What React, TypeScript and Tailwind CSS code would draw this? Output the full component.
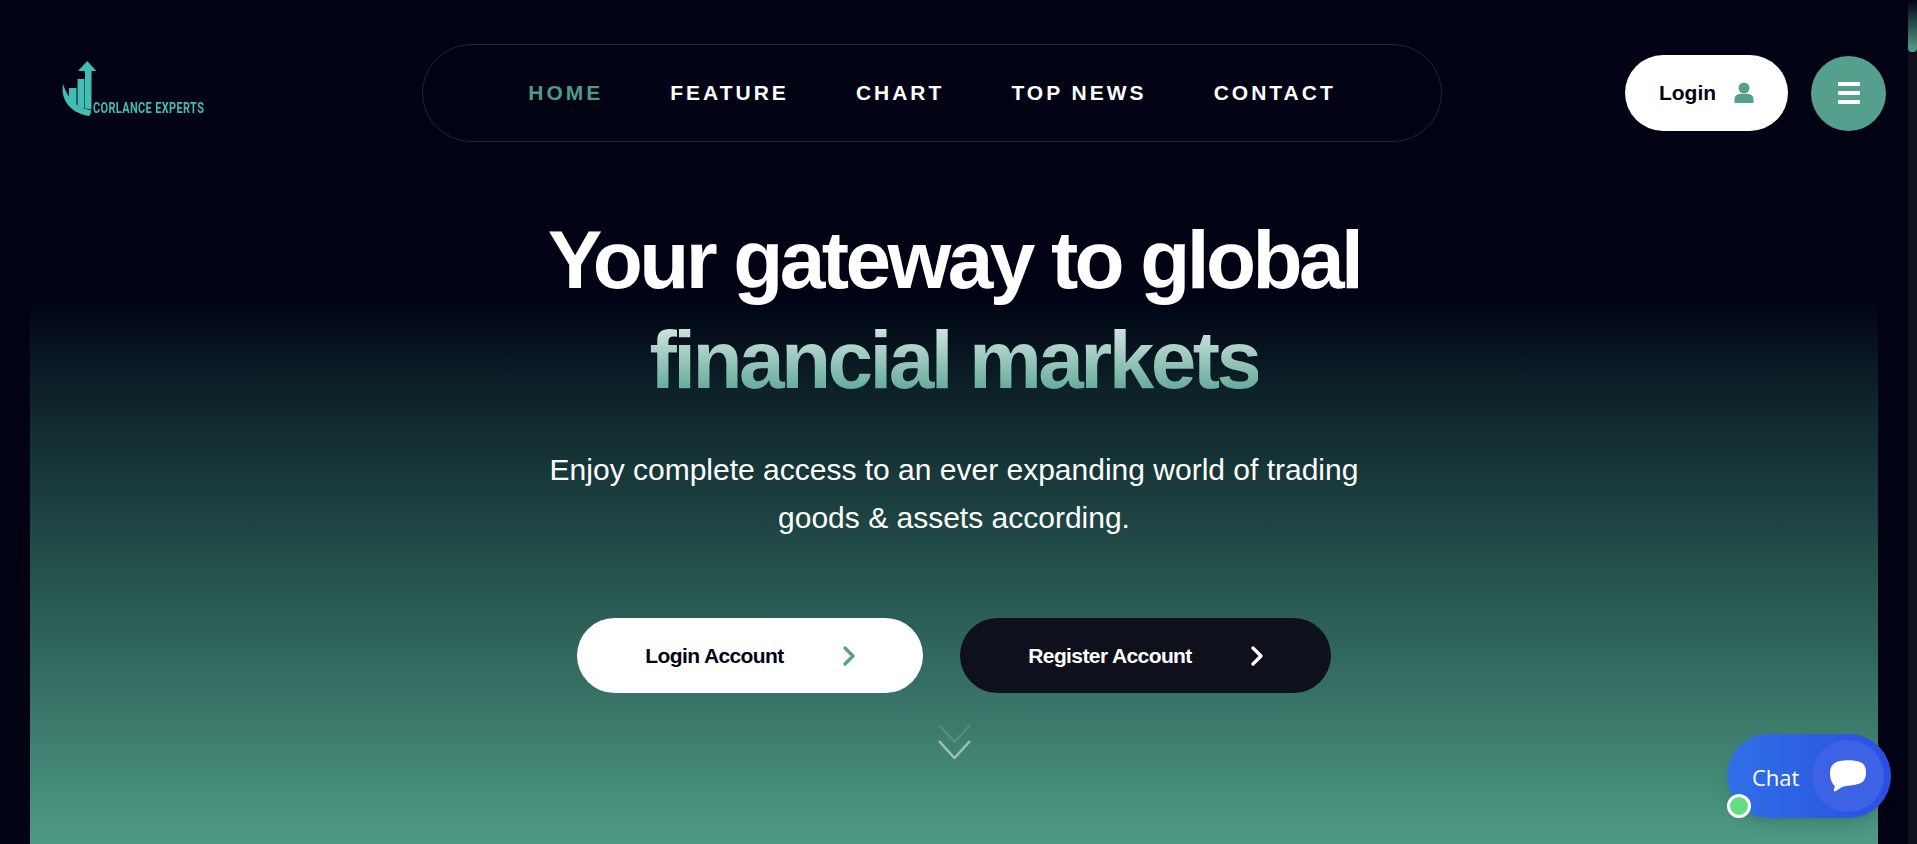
import React from 'react';
import { ChevronRight } from 'lucide-react';

const navItems = ['HOME', 'FEATURE', 'CHART', 'TOP NEWS', 'CONTACT'];

const Logo = () => (
  <div className="flex items-end">
    <svg width="35" height="56" viewBox="0 0 35 56" fill="#43bdb2">
      <path d="M1 23 C-1 34 3 50 26 55 Q29 55 29 49 C18 48 7 41 1 23Z" />
      <path d="M7 27 H14.5 V45.5 C11 43.5 9 40 7 36Z" />
      <path d="M15.5 18 H22.5 V47.5 L15.5 46Z" />
      <path d="M23 10 H29.5 V48.5 L23 47.5Z" />
      <path d="M16 10 L25.2 0 L34.5 10Z" />
    </svg>
    <span className="w-[112px] -ml-[4px] mb-[2px] origin-left scale-x-[0.78] whitespace-nowrap font-['Roboto',sans-serif] text-[14px] font-bold leading-none tracking-[0.5px] text-[#43bdb2]">
      CORLANCE EXPERTS
    </span>
  </div>
);

export default function App() {
  return (
    <div className="flex h-[844px] overflow-hidden bg-[#010314] font-['Liberation_Sans',Arial,sans-serif]">
      <div className="relative flex-1 min-w-0 flex flex-col">
        <header className="h-[170px] shrink-0 flex items-start pt-[44px] pl-[62px] pr-[22px]">
          <div className="w-[360px] pt-[17px]">
            <Logo />
          </div>
          <nav className="w-[1020px] h-[98px] rounded-full border border-[#22253a] flex items-center justify-center gap-[67px]">
            {navItems.map((item, i) => (
              <a
                key={item}
                className={`text-[21px] font-bold tracking-[3px] ${i === 0 ? 'text-[#4f9a87]' : 'text-white'}`}
              >
                {item}
              </a>
            ))}
          </nav>
          <div className="ml-auto flex items-center gap-[23px] pt-[11px]">
            <button className="w-[163px] h-[76px] rounded-full bg-white flex items-center justify-center gap-[18px] text-[21px] font-bold text-[#010314]">
              Login
              <svg width="20" height="22" viewBox="0 0 20 22" fill="#55a08d">
                <circle cx="10" cy="6" r="5.5" />
                <path d="M0.5 21 V17 C0.5 14 3 12 6 12 H14 C17 12 19.5 14 19.5 17 V21 Z" />
              </svg>
            </button>
            <button className="w-[75px] h-[75px] rounded-full bg-[#55a08d] flex flex-col items-center justify-center gap-[5px]">
              <span className="w-[22px] h-[4px] bg-white rounded-[1px]" />
              <span className="w-[22px] h-[4px] bg-white rounded-[1px]" />
              <span className="w-[22px] h-[4px] bg-white rounded-[1px]" />
            </button>
          </div>
        </header>

        <main className="flex-1 mx-[30px] flex flex-col items-center bg-[linear-gradient(180deg,#010314_19%,#0d2229_33%,#265650_62%,#4f9a84_100%)]">
          <h1 className="mt-[40px] text-[82px] leading-[100px] font-bold tracking-[-3.6px] text-white text-center whitespace-nowrap">
            Your gateway to global
            <br />
            <span className="bg-[linear-gradient(180deg,#d6e9e4_10%,#5ca592_90%)] bg-clip-text text-transparent">
              financial markets
            </span>
          </h1>
          <p className="mt-[36px] text-[30px] leading-[48px] text-white text-center whitespace-nowrap">
            Enjoy complete access to an ever expanding world of trading
            <br />
            goods &amp; assets according.
          </p>
          <div className="mt-[76px] flex gap-[37px]">
            <button className="w-[346px] h-[75px] pl-[10px] rounded-full bg-white flex items-center justify-center gap-[50px] text-[21px] font-bold tracking-[-0.6px] text-[#010314]">
              Login Account
              <ChevronRight size={32} strokeWidth={2.5} className="-ml-px text-[#55a08d]" />
            </button>
            <button className="w-[371px] h-[75px] pl-[10px] rounded-full bg-[#0e101c] flex items-center justify-center gap-[50px] text-[21px] font-bold tracking-[-0.6px] text-white">
              Register Account
              <ChevronRight size={32} strokeWidth={2.5} className="-ml-px text-white" />
            </button>
          </div>
          <svg width="33" height="35" viewBox="0 0 33 35" fill="none" strokeWidth="2.5" className="mt-[31px]">
            <path d="M1 1 L16.5 18 L32 1" stroke="#ffffff" strokeOpacity="0.12" />
            <path d="M1 17 L16.5 34 L32 17" stroke="#ffffff" strokeOpacity="0.5" />
          </svg>
        </main>

        <div className="absolute left-[1727px] top-[734px] w-[164px] h-[84px] rounded-full bg-[linear-gradient(90deg,#2f70e6,#2a4fe3)] flex items-center pl-[25px] pt-[2px] font-['Open_Sans',sans-serif] text-[22px] text-white shadow-lg">
          Chat
          <span className="absolute right-[7px] top-[6px] w-[72px] h-[72px] rounded-full bg-[#3d62e6] flex items-center justify-center">
            <svg width="36" height="32" viewBox="0 0 36 32" fill="#ffffff">
              <path d="M10 1 C16 0 25 0 30 2 C35 4 36 8 36 13 C36 19 33 23 28 24 C23 26 17 25 12 27 L6 31 C4 32 3.5 31 4 29 L5 26 C2 24 0 19 0 13 C0 6 4 2 10 1Z" />
            </svg>
          </span>
          <span className="absolute left-0 top-[60px] w-[24px] h-[24px] rounded-full bg-[#62de80] border-[3px] border-white" />
        </div>
      </div>

      <div className="w-[9px] shrink-0 bg-[#0e101c]">
        <div className="h-[52px] rounded-b-[4px] bg-[linear-gradient(180deg,#010314,#55a08d)]" />
      </div>
    </div>
  );
}
